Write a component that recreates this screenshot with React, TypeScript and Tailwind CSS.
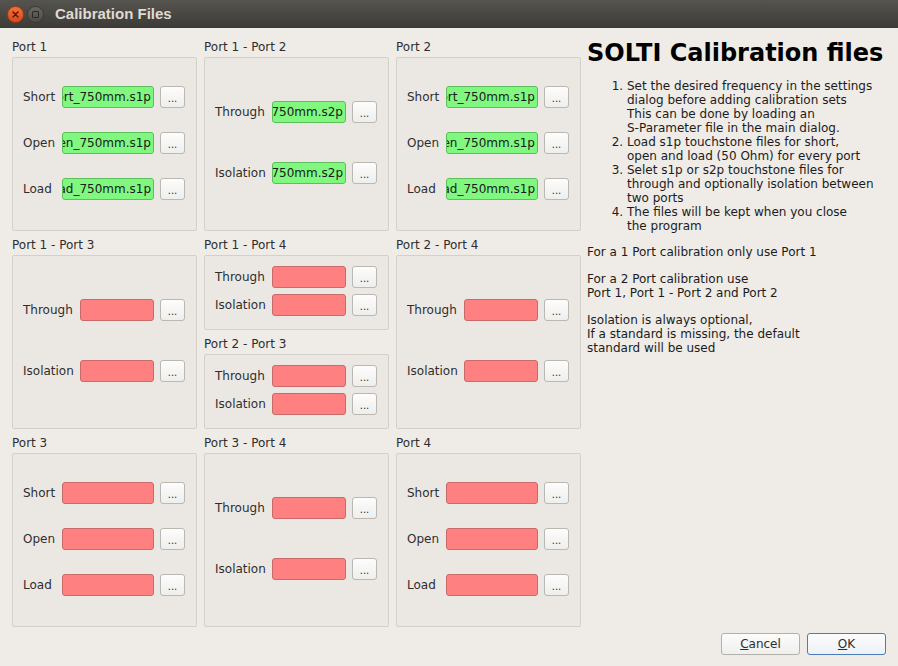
import React from "react";

const FONT = { fontFamily: '"DejaVu Sans", sans-serif' };

type Row = { label: string; value?: string };

function Edit({ value, w }: { value?: string; w: string }) {
  const ok = !!value;
  return (
    <div
      className={`${w} h-[22px] rounded-[3px] border flex items-center justify-end overflow-hidden pr-[2px] whitespace-nowrap text-[12px] text-[#1a1a1a] ${
        ok ? "bg-[#80f880] border-[#5cbf5c]" : "bg-[#ff8080] border-[#c96a6a]"
      }`}
    >
      {value}
    </div>
  );
}

function Dots() {
  return (
    <div className="w-[25px] h-[22px] rounded-[3px] border border-[#bbb7b1] bg-gradient-to-b from-[#fdfdfd] to-[#eeeeec] flex items-center justify-center text-[10px] text-[#333] leading-none pt-[3px] shrink-0">
      ...
    </div>
  );
}

function FormRow({ row, wide }: { row: Row; wide: boolean }) {
  return (
    <div className="flex items-center h-[22px]">
      <div className={`${wide ? "w-[57px]" : "w-[39px]"} text-[12px] text-[#2e2e2e] shrink-0`}>{row.label}</div>
      <Edit value={row.value} w={wide ? "w-[74px]" : "w-[92px]"} />
      <div className="w-[6px]" />
      <Dots />
    </div>
  );
}

function Group({
  title,
  rows,
  size,
}: {
  title: string;
  rows: Row[];
  size: "big3" | "big2" | "small";
}) {
  const wide = rows[0].label === "Through";
  let box = "";
  if (size === "big3") box = "h-[174px] pt-[28px] gap-[24px]";
  else if (size === "big2") box = "h-[174px] pt-[43px] gap-[39px]";
  else box = "h-[75px] pt-[10px] gap-[6px]";
  return (
    <div className="flex flex-col">
      <div className="h-[14px] leading-[14px] text-[12px] text-[#2e2e2e] mb-[3px]">{title}</div>
      <div className={`w-[185px] border border-[#d3cfc9] rounded-[2px] bg-[#ebe8e4] flex flex-col pl-[10px] ${box}`}>
        {rows.map((r) => (
          <FormRow key={r.label} row={r} wide={wide} />
        ))}
      </div>
    </div>
  );
}

const SOL = (v?: boolean): Row[] => [
  { label: "Short", value: v ? "short_750mm.s1p" : undefined },
  { label: "Open", value: v ? "open_750mm.s1p" : undefined },
  { label: "Load", value: v ? "load_750mm.s1p" : undefined },
];
const TI = (v?: boolean): Row[] => [
  { label: "Through", value: v ? "through_750mm.s2p" : undefined },
  { label: "Isolation", value: v ? "isolation_750mm.s2p" : undefined },
];

export default function App() {
  return (
    <div className="w-[898px] h-[666px] bg-[#efebe7] flex flex-col overflow-hidden" style={FONT}>
      {/* title bar */}
      <div className="h-[28px] bg-gradient-to-b from-[#56544f] to-[#3c3b37] flex items-center shrink-0">
        <div className="ml-[7px] w-[17px] h-[17px] rounded-full bg-gradient-to-b from-[#f4703d] to-[#d9481c] border border-[#9e3b17] flex items-center justify-center">
          <svg width="7" height="7" viewBox="0 0 7 7">
            <path d="M1 1 L6 6 M6 1 L1 6" stroke="#4a1a08" strokeWidth="1.4" strokeLinecap="round" />
          </svg>
        </div>
        <div className="ml-[3px] w-[17px] h-[17px] rounded-full bg-gradient-to-b from-[#6a6863] to-[#4d4b47] border border-[#393834] flex items-center justify-center">
          <div className="w-[7px] h-[7px] border border-[#2b2a27] rounded-[1px]" />
        </div>
        <div
          className="ml-[11px] text-[15px] font-bold text-[#dfdbd2]"
          style={{ fontFamily: '"Liberation Sans", sans-serif' }}
        >
          Calibration Files
        </div>
      </div>

      <div className="flex pl-[12px] pt-[12px]">
        {/* groups */}
        <div className="flex gap-[7px]">
          <div className="flex flex-col gap-[7px]">
            <Group title="Port 1" rows={SOL(true)} size="big3" />
            <Group title="Port 1 - Port 3" rows={TI()} size="big2" />
            <Group title="Port 3" rows={SOL()} size="big3" />
          </div>
          <div className="flex flex-col gap-[7px]">
            <Group title="Port 1 - Port 2" rows={TI(true)} size="big2" />
            <Group title="Port 1 - Port 4" rows={TI()} size="small" />
            <Group title="Port 2 - Port 3" rows={TI()} size="small" />
            <Group title="Port 3 - Port 4" rows={TI()} size="big2" />
          </div>
          <div className="flex flex-col gap-[7px]">
            <Group title="Port 2" rows={SOL(true)} size="big3" />
            <Group title="Port 2 - Port 4" rows={TI()} size="big2" />
            <Group title="Port 4" rows={SOL()} size="big3" />
          </div>
        </div>

        {/* help text */}
        <div className="ml-[6px] -mt-[1px] flex-1 text-[12px] leading-[14px] text-[#1c1c1c] whitespace-nowrap">
          <div className="text-[24px] font-bold leading-[28px] text-black">SOLTI Calibration files</div>
          <ol className="list-decimal pl-[40px] mt-[12px]">
            <li>
              Set the desired frequency in the settings
              <br />
              dialog before adding calibration sets
              <br />
              This can be done by loading an
              <br />
              S-Parameter file in the main dialog.
            </li>
            <li>
              Load s1p touchstone files for short,
              <br />
              open and load (50 Ohm) for every port
            </li>
            <li>
              Selet s1p or s2p touchstone files for
              <br />
              through and optionally isolation between
              <br />
              two ports
            </li>
            <li>
              The files will be kept when you close
              <br />
              the program
            </li>
          </ol>
          <p className="mt-[12px]">For a 1 Port calibration only use Port 1</p>
          <p className="mt-[13px]">
            For a 2 Port calibration use
            <br />
            Port 1, Port 1 - Port 2 and Port 2
          </p>
          <p className="mt-[13px]">
            Isolation is always optional,
            <br />
            If a standard is missing, the default
            <br />
            standard will be used
          </p>
        </div>
      </div>

      <div className="flex-1" />
      <div className="flex justify-end gap-[7px] pr-[12px] pb-[11px]">
        <div className="w-[79px] h-[22px] rounded-[3px] border border-[#b4b0aa] bg-gradient-to-b from-[#fcfcfc] to-[#efefed] flex items-center justify-center text-[12px] text-[#2e2e2e]">
          <span>
            <span className="underline">C</span>ancel
          </span>
        </div>
        <div className="w-[79px] h-[22px] rounded-[3px] border border-[#4a7db5] bg-gradient-to-b from-[#fbfcfd] to-[#eef2f6] flex items-center justify-center text-[12px] text-[#2e2e2e]">
          <span>
            <span className="underline">O</span>K
          </span>
        </div>
      </div>
    </div>
  );
}
